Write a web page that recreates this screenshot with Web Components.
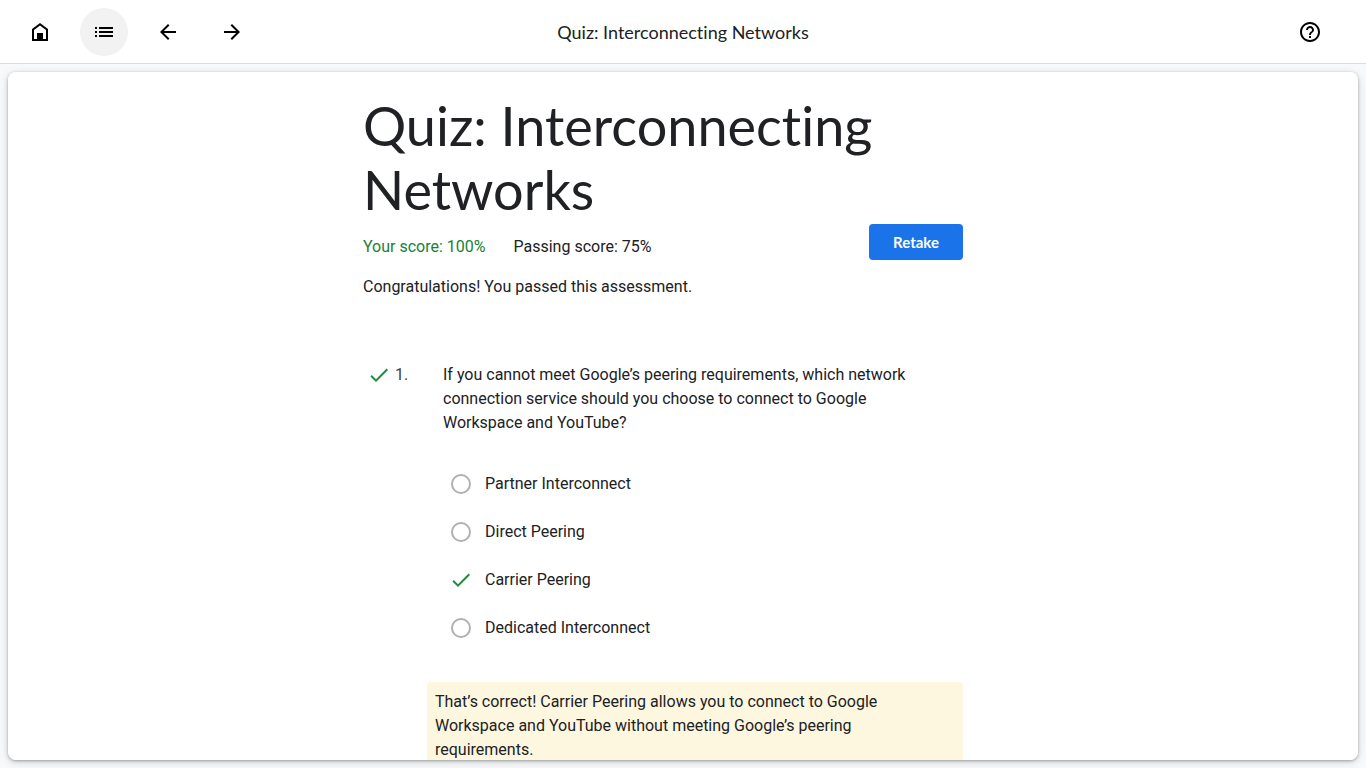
<!DOCTYPE html>
<html lang="en">
<head>
<meta charset="utf-8">
<meta name="viewport" content="width=device-width, initial-scale=1">
<title>Quiz: Interconnecting Networks</title>
<style>
  html, body { height: 100%; margin: 0; }
  body {
    --ink: #202124;
    --green: #188038;
    --blue: #1a73e8;
    --display: Lato, "Open Sans", sans-serif;
    color: var(--ink);
    font: 16px/24px Roboto, "Liberation Sans", sans-serif;
  }
</style>
</head>
<body>
<quiz-app>
  <top-bar slot="bar">
    <icon-button slot="start" icon="home" label="Home"></icon-button>
    <icon-button slot="start" icon="list" label="Course outline" active></icon-button>
    <icon-button slot="start" icon="back" label="Previous"></icon-button>
    <icon-button slot="start" icon="forward" label="Next"></icon-button>
    Quiz: Interconnecting Networks
    <icon-button slot="end" icon="help" label="Help"></icon-button>
  </top-bar>
  <quiz-summary>
    <span slot="title">Quiz: Interconnecting Networks</span>
    <span slot="score">Your score: 100%</span>
    <span slot="passing">Passing score: 75%</span>
    <span slot="message">Congratulations! You passed this assessment.</span>
  </quiz-summary>
  <quiz-question number="1." options="Partner Interconnect|Direct Peering|Carrier Peering|Dedicated Interconnect" answer="2">
    <span slot="prompt">If you cannot meet Google’s peering requirements, which network connection service should you choose to connect to Google Workspace and YouTube?</span>
    <span slot="feedback">That’s correct! Carrier Peering allows you to connect to Google Workspace and YouTube without meeting Google’s peering requirements.</span>
  </quiz-question>
</quiz-app>

<script>
const ICONS = {
  home: '<path fill-rule="evenodd" d="M4 21V9l8-6 8 6v12ZM6 19h3v-6h6v6h3v-9l-6-4.5L6 10Z"/><path d="M9 13h6v7H9Z"/>',
  list: '<path d="M7 7h14v2H7Zm0 4h14v2H7Zm0 4h14v2H7ZM3 7h2v2H3Zm0 4h2v2H3Zm0 4h2v2H3Z"/>',
  back: '<path d="m7.825 13 5.6 5.6L12 20l-8-8 8-8 1.425 1.4-5.6 5.6H20v2Z"/>',
  forward: '<path d="M16.175 13H4v-2h12.175l-5.6-5.6L12 4l8 8-8 8-1.425-1.4Z"/>',
  help: '<path d="M11 18h2v-2h-2v2Zm1-16C6.48 2 2 6.48 2 12s4.48 10 10 10 10-4.48 10-10S17.52 2 12 2Zm0 18c-4.41 0-8-3.59-8-8s3.59-8 8-8 8 3.59 8 8-3.59 8-8 8Zm0-14c-2.21 0-4 1.79-4 4h2c0-1.1.9-2 2-2s2 .9 2 2c0 2-3 1.75-3 5h2c0-2.25 3-2.5 3-5 0-2.21-1.79-4-4-4Z"/>',
  check: '<path d="M9 16.17 4.83 12l-1.42 1.41L9 19 21 7l-1.41-1.41Z"/>'
};
const svg = (name) => `<svg viewBox="0 0 24 24" aria-hidden="true">${ICONS[name]}</svg>`;

class QuizElement extends HTMLElement {
  connectedCallback() {
    if (this.shadowRoot) return;
    this.attachShadow({ mode: 'open' }).innerHTML = this.render();
  }
}

customElements.define('icon-button', class extends QuizElement {
  render() {
    return `<style>
      :host { display: block; }
      button { display: grid; place-items: center; width: 48px; height: 48px; padding: 0; border: 0; border-radius: 50%; background: none; color: #000; cursor: pointer; }
      button:hover, :host([active]) button { background: #f2f2f2; }
      svg { width: 24px; height: 24px; fill: currentColor; }
    </style>
    <button type="button" aria-label="${this.getAttribute('label')}">${svg(this.getAttribute('icon'))}</button>`;
  }
});

customElements.define('top-bar', class extends QuizElement {
  render() {
    return `<style>
      :host { display: block; }
      header { display: grid; grid-template-columns: 1fr auto 1fr; align-items: center; box-sizing: border-box; height: 64px; padding: 0 32px 0 16px; border-bottom: 1px solid #dadce0; background: #fff; }
      nav { display: flex; gap: 16px; }
      .title { font: 18px/24px var(--display); font-variant-ligatures: none; padding-left: 16px; }
      .end { justify-self: end; }
    </style>
    <header>
      <nav aria-label="Course"><slot name="start"></slot></nav>
      <div class="title"><slot></slot></div>
      <div class="end"><slot name="end"></slot></div>
    </header>`;
  }
});

customElements.define('quiz-app', class extends QuizElement {
  render() {
    return `<style>
      :host { display: flex; flex-direction: column; height: 100vh; background: #f8f9fa; }
      main { flex: 1; min-height: 0; margin: 8px; overflow-y: auto; scrollbar-width: none; border-radius: 8px; background: #fff; box-shadow: 0 1px 3px rgba(60,64,67,.4), 0 2px 8px rgba(60,64,67,.2); }
      .column { box-sizing: border-box; max-width: 640px; margin: 0 auto; padding: 22px 40px 40px 0; }
    </style>
    <slot name="bar"></slot>
    <main><div class="column"><slot></slot></div></main>`;
  }
});

customElements.define('quiz-summary', class extends QuizElement {
  render() {
    return `<style>
      :host { display: block; }
      h1 { margin: 0 0 2px; font: 400 54px/64px var(--display); font-variant-ligatures: none; }
      .row { display: flex; justify-content: space-between; align-items: flex-start; }
      .scores { display: flex; gap: 28px; padding-top: 11px; }
      .score { color: var(--green); }
      button { height: 36px; padding: 0 24px; border: 0; border-radius: 4px; background: var(--blue); color: #fff; font: 700 15px/20px var(--display); cursor: pointer; }
      p { margin: 15px 0 0; }
    </style>
    <h1><slot name="title"></slot></h1>
    <div class="row">
      <div class="scores"><span class="score"><slot name="score"></slot></span><span><slot name="passing"></slot></span></div>
      <button type="button">Retake</button>
    </div>
    <p><slot name="message"></slot></p>`;
  }
});

customElements.define('quiz-question', class extends QuizElement {
  render() {
    const answer = Number(this.getAttribute('answer'));
    const options = this.getAttribute('options').split('|').map((text, i) => `
      <div class="option${i === answer ? ' correct' : ''}">
        <span class="mark"><input type="radio" name="choice" id="choice-${i}" ${i === answer ? 'checked' : ''}>${i === answer ? svg('check') : ''}</span>
        <label for="choice-${i}">${text}</label>
      </div>`).join('');
    return `<style>
      :host { display: block; margin-top: 64px; }
      .prompt { display: grid; grid-template-columns: 28px 48px 1fr; padding: 0 24px 0 4px; }
      .number { color: #3c4043; }
      svg { width: 24px; height: 24px; fill: #1e8e3e; }
      fieldset { min-width: 0; margin: 0; padding: 0; border: 0; }
      .options { padding: 25px 0 30px 86px; }
      .option { display: flex; align-items: center; gap: 12px; height: 48px; }
      .mark { display: grid; place-items: center; width: 24px; height: 24px; }
      .mark > * { grid-area: 1 / 1; }
      input { appearance: none; box-sizing: border-box; width: 20px; height: 20px; margin: 0; border: 2px solid #b1b1b1; border-radius: 50%; }
      .correct input { border-color: transparent; }
      .mark svg { pointer-events: none; }
      .feedback { margin-left: 64px; padding: 8px 24px 8px 8px; border-radius: 4px; background: #fef7e0; }
    </style>
    <fieldset aria-labelledby="prompt">
      <div class="prompt">${svg('check')}<span class="number">${this.getAttribute('number')}</span><span id="prompt"><slot name="prompt"></slot></span></div>
      <div class="options">${options}</div>
    </fieldset>
    <div class="feedback"><slot name="feedback"></slot></div>`;
  }
});
</script>
</body>
</html>
